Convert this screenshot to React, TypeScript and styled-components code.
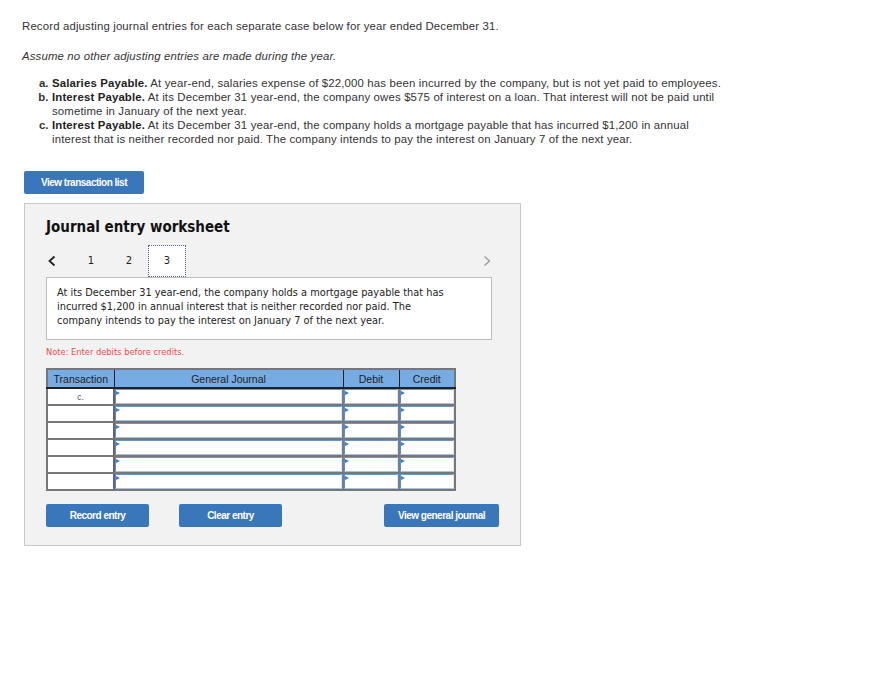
import React from 'react';
import styled, { createGlobalStyle } from 'styled-components';

const GlobalStyle = createGlobalStyle`
  html, body {
    margin: 0;
    background: #fff;
  }
  body {
    font-family: "Liberation Sans", Arial, sans-serif;
    color: #333;
  }
`;

type Row = { transaction: string };

const rows: Row[] = [
  { transaction: 'c.' },
  { transaction: '' },
  { transaction: '' },
  { transaction: '' },
  { transaction: '' },
  { transaction: '' },
];

const Chevron: React.FC<{ dir: 'left' | 'right' }> = ({ dir }) => (
  <svg width="10" height="12" viewBox="0 0 10 12">
    {dir === 'left' ? (
      <polyline points="7.5,1.5 2.5,6 7.5,10.5" fill="none" stroke="#222" strokeWidth="1.8" />
    ) : (
      <polyline points="2.5,1.5 7.5,6 2.5,10.5" fill="none" stroke="#9a9a9a" strokeWidth="1.3" />
    )}
  </svg>
);

const App: React.FC = () => {
  return (
    <Page>
      <GlobalStyle />
      <Intro>Record adjusting journal entries for each separate case below for year ended December 31.</Intro>
      <Assume>Assume no other adjusting entries are made during the year.</Assume>
      <CaseList>
        <li>
          <strong>Salaries Payable.</strong> At year-end, salaries expense of $22,000 has been incurred by the company, but is not yet paid to employees.
        </li>
        <li>
          <strong>Interest Payable.</strong> At its December 31 year-end, the company owes $575 of interest on a loan. That interest will not be paid until
          <br />
          sometime in January of the next year.
        </li>
        <li>
          <strong>Interest Payable.</strong> At its December 31 year-end, the company holds a mortgage payable that has incurred $1,200 in annual
          <br />
          interest that is neither recorded nor paid. The company intends to pay the interest on January 7 of the next year.
        </li>
      </CaseList>

      <BlueButton $width={120} $indent={2}>View transaction list</BlueButton>

      <Worksheet>
        <Title>Journal entry worksheet</Title>
        <Nav>
          <Arrow>
            <Chevron dir="left" />
          </Arrow>
          <NavItem>1</NavItem>
          <NavItem>2</NavItem>
          <NavItem $active>3</NavItem>
          <Arrow $right>
            <Chevron dir="right" />
          </Arrow>
        </Nav>
        <Description>
          At its December 31 year-end, the company holds a mortgage payable that has
          <br />
          incurred $1,200 in annual interest that is neither recorded nor paid. The
          <br />
          company intends to pay the interest on January 7 of the next year.
        </Description>
        <Note>Note: Enter debits before credits.</Note>

        <Table>
          <colgroup>
            <col style={{ width: 67 }} />
            <col style={{ width: 229 }} />
            <col style={{ width: 56 }} />
            <col style={{ width: 56 }} />
          </colgroup>
          <thead>
            <tr>
              <th>Transaction</th>
              <th>General Journal</th>
              <th>Debit</th>
              <th>Credit</th>
            </tr>
          </thead>
          <tbody>
            {rows.map((row, index) => (
              <tr key={index}>
                <TransCell>{row.transaction}</TransCell>
                <InputCell>
                  <Field />
                </InputCell>
                <InputCell>
                  <Field />
                </InputCell>
                <InputCell>
                  <Field />
                </InputCell>
              </tr>
            ))}
          </tbody>
        </Table>

        <ButtonRow>
          <BlueButton $width={103}>Record entry</BlueButton>
          <BlueButton $width={103} $indent={30}>Clear entry</BlueButton>
          <BlueButton $width={115} $push>View general journal</BlueButton>
        </ButtonRow>
      </Worksheet>
    </Page>
  );
};

export default App;

const Page = styled.div`
  padding: 19px 0 40px 22px;
  font-size: 11.4px;
  letter-spacing: 0.15px;
  line-height: 14px;
  color: #333;
`;

const Intro = styled.p`
  margin: 0;
`;

const Assume = styled.p`
  margin: 16px 0 0;
  font-style: italic;
`;

const CaseList = styled.ol`
  margin: 13px 0 0;
  padding-left: 30px;
  list-style-type: lower-alpha;
  li::marker {
    font-weight: bold;
  }
  strong {
    font-weight: bold;
    color: #222;
  }
`;

const BlueButton = styled.button<{ $width: number; $indent?: number; $push?: boolean }>`
  display: block;
  width: ${(p) => p.$width}px;
  height: 23px;
  margin: 0 0 0 ${(p) => (p.$push ? 'auto' : `${p.$indent ?? 0}px`)};
  padding: 0;
  border: none;
  border-radius: 2px;
  background: #3a76ba;
  color: #fff;
  font-family: "Liberation Sans", Arial, sans-serif;
  font-size: 10px;
  font-weight: bold;
  letter-spacing: -0.5px;
  cursor: pointer;

  ${CaseList} + & {
    margin-top: 25px;
  }
`;

const Worksheet = styled.section`
  width: 497px;
  box-sizing: border-box;
  margin: 9px 0 0 2px;
  padding: 14px 28px 18px 21px;
  background: #f2f2f2;
  border: 1px solid #c8c8c8;
  font-family: "DejaVu Sans", Verdana, sans-serif;
  letter-spacing: 0;
`;

const Title = styled.h2`
  margin: 0;
  font-family: "DejaVu Sans Condensed", "DejaVu Sans", Verdana, sans-serif;
  font-size: 15px;
  line-height: 18px;
  font-weight: bold;
  color: #111;
`;

const Nav = styled.div`
  display: flex;
  align-items: stretch;
  height: 32px;
  margin-top: 9px;
`;

const Arrow = styled.span<{ $right?: boolean }>`
  width: 26px;
  display: flex;
  align-items: center;
  justify-content: ${(p) => (p.$right ? 'flex-end' : 'flex-start')};
  margin-left: ${(p) => (p.$right ? 'auto' : '0')};
  padding: 0 0 0 1px;
  box-sizing: border-box;
`;

const NavItem = styled.span<{ $active?: boolean }>`
  width: 38px;
  display: flex;
  align-items: center;
  justify-content: center;
  box-sizing: border-box;
  font-size: 10px;
  color: #222;
  background: ${(p) => (p.$active ? '#fff' : 'transparent')};
  border: 1px dotted ${(p) => (p.$active ? '#4a5f8a' : 'transparent')};
  position: relative;
  z-index: 1;
`;

const Description = styled.div`
  background: #fff;
  border: 1px solid #bdbdbd;
  padding: 8px 10px 0;
  height: 63px;
  box-sizing: border-box;
  font-size: 9.8px;
  line-height: 14px;
  color: #222;
`;

const Note = styled.p`
  margin: 6px 0 0;
  font-size: 8.3px;
  line-height: 12px;
  color: #d9534f;
`;

const Table = styled.table`
  margin-top: 10px;
  width: 408px;
  table-layout: fixed;
  border-collapse: collapse;
  border: 2px solid #777;
  font-family: "Liberation Sans", Arial, sans-serif;

  th {
    height: 17px;
    padding: 0;
    background: #77abe4;
    color: #222;
    font-size: 10.5px;
    font-weight: normal;
    border: 1px solid #222;
    border-bottom: 2px solid #222;
    border-top: none;
  }
  th:first-child {
    border-left: none;
  }
  th:last-child {
    border-right: none;
  }
  td {
    height: 15px;
    padding: 0;
    background: #fff;
    border-bottom: 2px solid #777;
  }
`;

const TransCell = styled.td`
  font-size: 8.5px;
  color: #555;
  text-align: center;
  vertical-align: middle;
  line-height: 12px;
  border-right: 2px solid #666;
`;

const InputCell = styled.td`
  border-right: 2px solid #6f7f95;
  &:last-child {
    border-right: none;
  }
`;

const Field = styled.div`
  position: relative;
  height: 15px;
  box-sizing: border-box;
  border-top: 1px solid #6a95cc;
  border-left: 1px solid #5c8dca;
  border-right: 1px solid #dfe8f3;
  border-bottom: 1px solid #a9c1df;
  background: #fff;

  &::before {
    content: '';
    position: absolute;
    left: 0;
    top: 1px;
    border-top: 2px solid transparent;
    border-bottom: 2px solid transparent;
    border-left: 4px solid #3f7cc4;
  }
`;

const ButtonRow = styled.div`
  display: flex;
  width: 453px;
  margin-top: 13px;
`;
